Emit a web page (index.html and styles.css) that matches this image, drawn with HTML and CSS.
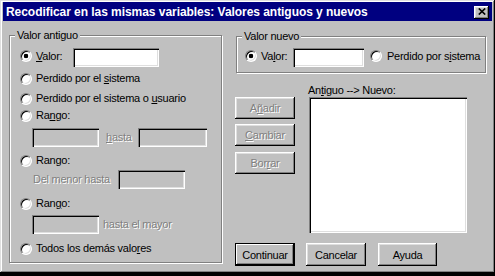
FILE: index.html
```html
<!DOCTYPE html>
<html lang="es">
<head>
<meta charset="utf-8">
<title>Recodificar</title>
<link rel="stylesheet" href="styles.css">
</head>
<body>
<div class="dialog">
  <div class="titlebar">
    <span class="title">Recodificar en las mismas variables: Valores antiguos y nuevos</span>
    <span class="close"><svg width="8" height="7" viewBox="0 0 8 7"><path d="M0.8 0.5L7.2 6.5M7.2 0.5L0.8 6.5" stroke="#000" stroke-width="1.7" fill="none"/></svg></span>
  </div>
  <div class="body">
    <div class="group group-old">
      <span class="legend">Valor antiguo</span>
      <div class="row r1"><span class="radio on up"></span><span class="lbl w37 up"><u>V</u>alor:</span><span class="field w86"></span></div>
      <div class="row r2"><span class="radio"></span><span class="lbl">Perdido por el <u>s</u>istema</span></div>
      <div class="row r3"><span class="radio"></span><span class="lbl">Perdido por el sistema o <u>u</u>suario</span></div>
      <div class="row r4"><span class="radio"></span><span class="lbl">Ra<u>n</u>go:</span></div>
      <div class="row r5 indent"><span class="field off w67"></span><span class="lbl dis w32 ml7"><u>h</u>asta</span><span class="field off w69"></span></div>
      <div class="row r6"><span class="radio"></span><span class="lbl">Rango:</span></div>
      <div class="row r7 indent2"><span class="lbl dis w85">Del menor hasta</span><span class="field off w67"></span></div>
      <div class="row r8"><span class="radio"></span><span class="lbl">Ran<u>g</u>o:</span></div>
      <div class="row r9 indent"><span class="field off w67"></span><span class="lbl dis ml4">hasta el mayor</span></div>
      <div class="row r10"><span class="radio"></span><span class="lbl">Todos los demás valo<u>r</u>es</span></div>
    </div>
    <div class="rightcol">
      <div class="group group-new">
        <span class="legend">Valor nuevo</span>
        <div class="row rn"><span class="radio on up"></span><span class="lbl w32 up">Va<u>l</u>or:</span><span class="field w71"></span><span class="radio up ml6 mr5"></span><span class="lbl up">Perdido por s<u>i</u>stema</span></div>
      </div>
      <div class="mid">
        <div class="btncol">
          <div class="btn dis">A<u>ñ</u>adir</div>
          <div class="btn dis b2"><u>C</u>ambiar</div>
          <div class="btn dis b3">Bor<u>r</u>ar</div>
        </div>
        <div class="listcol">
          <div class="caption">An<u>t</u>iguo --&gt; Nuevo:</div>
          <div class="listbox"></div>
        </div>
      </div>
      <div class="actions">
        <div class="btn big default">Continuar</div>
        <div class="btn big a2">Cancelar</div>
        <div class="btn big a3">Ayuda</div>
      </div>
    </div>
  </div>
</div>
</body>
</html>
```
FILE: styles.css
```css
* { box-sizing: border-box; }
html, body { margin: 0; background: #000; }
body {
  font-family: "Liberation Sans", Arial, sans-serif;
  font-size: 11px;
  letter-spacing: -0.25px;
  color: #000;
}
u { text-decoration: underline; text-underline-offset: 1px; }

.dialog {
  width: 495px;
  height: 273px;
  background: #c0c0c0;
  padding: 2px 3px;
  box-shadow: inset -1px -1px #000, inset 1px 1px #dfdfdf, inset -2px -2px #808080, inset 2px 2px #fff;
  display: flex;
  flex-direction: column;
}

.titlebar {
  height: 19px;
  flex: none;
  background: #000080;
  display: flex;
  align-items: center;
  justify-content: space-between;
  padding: 0 3px;
}
.title {
  color: #fff;
  font-weight: bold;
  font-size: 12px;
  letter-spacing: -0.05px;
  white-space: nowrap;
}
.close {
  width: 15px;
  height: 13px;
  margin-top: 1px;
  background: #c0c0c0;
  box-shadow: inset -1px -1px #000, inset 1px 1px #fff, inset -2px -2px #808080, inset 2px 2px #dfdfdf;
  display: flex;
  align-items: center;
  justify-content: center;
}
.close svg { display: block; margin: 0 0 1px 0; }

.body { display: flex; flex: 1; }

.group {
  border: 1px solid #808080;
  box-shadow: inset 1px 1px #fff, 1px 1px #fff;
  display: flex;
  flex-direction: column;
  align-items: flex-start;
  flex: none;
}
.legend {
  margin: -7px 0 0 5px;
  padding: 0 2px;
  background: #c0c0c0;
  height: 13px;
  line-height: 13px;
  white-space: nowrap;
}
.group-old { margin: 14px 0 0 6px; width: 213px; height: 228px; }
.group-new { margin: 15px 0 0 1px; width: 250px; height: 37px; }

.row {
  display: flex;
  align-items: center;
  height: 17px;
  margin-left: 10px;
  white-space: nowrap;
}
.row.indent { margin-left: 22px; height: 19px; }
.row.indent2 { margin-left: 23px; height: 19px; }
.r1 { margin-top: 6px; height: 19px; }
.r2 { margin-top: 3px; }
.r3 { margin-top: 3px; }
.r4 { margin-top: 0; }
.r5 { margin-top: 4px; }
.r6 { margin-top: 5px; }
.r7 { margin-top: 1px; }
.r8 { margin-top: 6px; }
.r9 { margin-top: 3px; }
.r10 { margin-top: 6px; }
.rn { margin: 5px 0 0 8px; height: 19px; }

.radio {
  flex: none;
  width: 12px;
  height: 12px;
  border-radius: 50%;
  border: 1px solid;
  border-color: #808080 #fff #fff #808080;
  box-shadow: inset 1px 1px #000, inset -1px -1px #dfdfdf;
  background: #fff;
  margin-right: 4px;
}
.radio.on { background: radial-gradient(circle, #000 0 2px, #fff 2.6px); }
.up { margin-bottom: 3px; }
.ml6 { margin-left: 6px; }
.mr5 { margin-right: 5px; }
.ml7 { margin-left: 7px; }
.ml4 { margin-left: 4px; }

.lbl { line-height: 13px; }
.w37 { width: 37px; }
.w32 { width: 32px; }
.w85 { width: 85px; }
.dis { color: #808080; text-shadow: 1px 1px #fff; }

.field {
  flex: none;
  height: 19px;
  background: #fff;
  box-shadow: inset 1px 1px #808080, inset 2px 2px #000, inset -1px -1px #fff, inset -2px -2px #dfdfdf;
}
.field.off { background: #c0c0c0; }
.w86 { width: 86px; }
.w67 { width: 67px; }
.w69 { width: 69px; }
.w71 { width: 71px; }

.rightcol { margin-left: 13px; display: flex; flex-direction: column; }

.mid { display: flex; margin-top: 11px; }
.btncol { display: flex; flex-direction: column; width: 60px; margin-top: 13px; }
.listcol { margin-left: 13px; display: flex; flex-direction: column; }
.caption { height: 13px; line-height: 13px; }
.listbox {
  margin-left: 1px;
  width: 158px;
  height: 136px;
  background: #fff;
  box-shadow: inset 1px 1px #808080, inset 2px 2px #000, inset -1px -1px #fff, inset -2px -2px #dfdfdf;
}

.btn {
  width: 60px;
  height: 22px;
  display: flex;
  align-items: center;
  justify-content: center;
  background: #c0c0c0;
  box-shadow: inset -1px -1px #000, inset 1px 1px #fff, inset -2px -2px #808080, inset 2px 2px #dfdfdf;
  white-space: nowrap;
}
.btn.dis { color: #808080; text-shadow: 1px 1px #fff; }
.b2 { margin-top: 5px; }
.b3 { margin-top: 6px; }

.actions { display: flex; margin-top: 10px; }
.btn.big { height: 23px; }
.btn.default {
  border: 1px solid #000;
  box-shadow: inset -1px -1px #000, inset 1px 1px #fff, inset -2px -2px #808080;
}
.a2 { margin-left: 11px; }
.a3 { margin-left: 12px; width: 59px; }
```
